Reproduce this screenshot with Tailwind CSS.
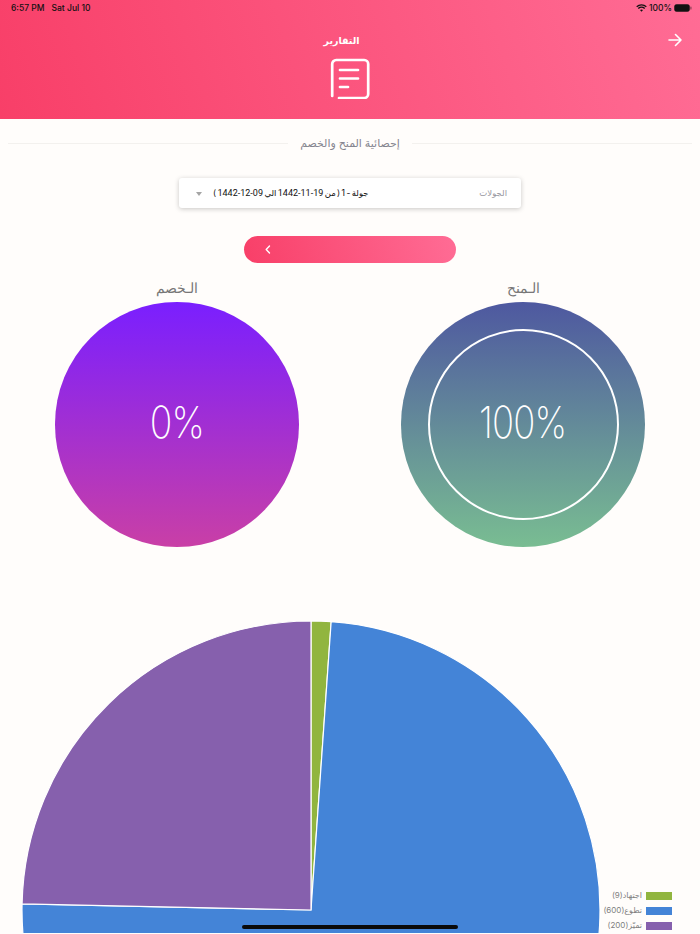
<!DOCTYPE html>
<html lang="ar">
<head>
<meta charset="utf-8">
<script src="https://cdn.jsdelivr.net/npm/@tailwindcss/browser@4"></script>
</head>
<body class="m-0">
<div class="relative w-[700px] h-[934px] overflow-hidden bg-[#fffdfb] font-['Inter','DejaVu_Sans',sans-serif]">
  <header class="h-[119px] bg-[linear-gradient(72deg,#f83f68,#ff6c95)] flex flex-col">
    <div class="h-[16px] flex items-center justify-between pl-[11px] pr-[8px] text-[8.5px] leading-none font-medium text-[#111]">
      <div class="flex gap-[7px]"><span>6:57 PM</span><span>Sat Jul 10</span></div>
      <div class="flex items-center gap-[2px]">
        <svg width="11" height="8" viewBox="0 0 11 8" fill="none" stroke="#111" stroke-width="1.3"><path d="M.7 2.8a7 7 0 0 1 9.6 0M2.3 4.5a4.6 4.6 0 0 1 6.4 0"/><path d="M4 6.1a2.2 2.2 0 0 1 3 0L5.500 7.700z" fill="#111" stroke="none"/></svg>
        <span>100%</span>
        <svg width="18" height="8" viewBox="0 0 18 8"><rect x=".5" y=".5" width="15" height="7" rx="2" fill="#111" stroke="#111" stroke-opacity=".5"/><rect x="16.300" y="2.500" width="1.200" height="3" rx=".6" fill="#111" opacity=".5"/></svg>
      </div>
    </div>
    <div class="relative h-[47px] flex justify-center pt-[18px] pr-[17px]">
      <span dir="rtl" class="text-white text-[9.5px] leading-[14px] font-bold">التقارير</span>
      <svg class="absolute right-[18px] top-[17px]" width="14" height="14" viewBox="0 0 14 14" fill="none" stroke="#fff" stroke-width="1.6" stroke-linecap="round" stroke-linejoin="round"><path d="M1 7h12M7.500 1.500 13 7l-5.500 5.500"/></svg>
    </div>
    <div class="flex justify-center -mt-[5px]">
      <svg width="40" height="41" viewBox="0 0 40 41" fill="none" stroke="#fff" stroke-width="2.700" stroke-linecap="round"><path d="M2.200 38V6a4 4 0 0 1 4-4h28a4 4 0 0 1 4 4v30a4 4 0 0 1-4 4H9"/><path d="M10 12h18M10 20.500h18M10 29h8"/></svg>
    </div>
  </header>

  <div class="h-[1px]"></div>
  <div class="flex items-center mt-[15px] h-[16px] px-[8px] gap-[12px]">
    <div class="flex-1 h-px bg-[#f3f1ee]"></div>
    <span dir="rtl" class="text-[11px] leading-none font-medium text-[#85858f] mt-[1px]">إحصائية المنح والخصم</span>
    <div class="flex-1 h-px bg-[#f3f1ee]"></div>
  </div>

  <div class="mt-[27px] mx-auto w-[342px] h-[30px] bg-white rounded-[3px] shadow-[0_1px_5px_rgba(0,0,0,0.22)] flex items-center justify-between pl-[17px] pr-[14px]">
    <div class="flex items-center gap-[11px]">
      <span class="w-0 h-0 border-x-[3.5px] border-x-transparent border-t-[4px] border-t-[#a5a5a5] mt-[1px]"></span>
      <span dir="rtl" class="text-[8.5px] leading-none text-[#111] [word-spacing:-1px]">جولة - 1 ( من <span class="font-['Roboto'] text-[9px] tracking-[-0.9px]">19-11-1442</span> الي <span class="font-['Roboto'] text-[9px] tracking-[-0.9px]">09-12-1442</span> )</span>
    </div>
    <span dir="rtl" class="text-[8.5px] leading-none text-[#96969e]">الجولات</span>
  </div>

  <div class="mt-[28px] mx-auto w-[212px] h-[27px] rounded-full bg-[linear-gradient(72deg,#f83f68,#ff6c95)] flex items-center pl-[21px]">
    <svg width="6" height="9" viewBox="0 0 6 9" fill="none" stroke="#fff" stroke-width="1.400" stroke-linecap="round" stroke-linejoin="round"><path d="M4.500 1 1.200 4.500 4.500 8"/></svg>
  </div>

  <div class="mt-[16px] grid grid-cols-[354px_338px]">
    <div class="flex flex-col items-center">
      <span dir="rtl" class="text-[14px] leading-[18px] text-[#777] font-light">الـخصم</span>
      <div class="mt-[5px] w-[244px] h-[245px] rounded-full bg-[linear-gradient(180deg,#7a1fff,#c93fa6)] flex items-center justify-center text-white text-[44px] font-extralight tracking-[-1px] pb-[6px]"><span class="block scale-x-[0.85]">0%</span></div>
    </div>
    <div class="flex flex-col items-center">
      <span dir="rtl" class="text-[14px] leading-[18px] text-[#777] font-light">الـمنح</span>
      <div class="mt-[5px] w-[244px] h-[245px] rounded-full bg-[linear-gradient(180deg,#4e58a0,#79bd92)] flex items-center justify-center">
        <div class="w-[191px] h-[191px] rounded-full border-2 border-white flex items-center justify-center text-white text-[44px] font-extralight tracking-[-1px] pb-[6px]"><span class="block scale-x-[0.83]">100%</span></div>
      </div>
    </div>
  </div>

  <svg class="block mt-[52px]" width="700" height="334" viewBox="0 600 700 334">
    <path d="M311 911V622A289 289 0 0 1 331.160 622.700Z" fill="#91b53f" stroke="#fff" stroke-width="1.200"/>
    <path d="M311 911 331.160 622.700A289 289 0 1 1 22.060 904.950Z" fill="#4484d7" stroke="#fff" stroke-width="1.200"/>
    <path d="M311 911 22.060 904.950A289 289 0 0 1 311 622Z" fill="#8660ad" stroke="#fff" stroke-width="1.200"/>
  </svg>

  <div class="absolute right-[28px] top-[891px] flex flex-col gap-[6px] text-[8px] leading-[9px] text-[#808080]">
    <div class="flex items-center justify-end gap-[4px]"><span dir="rtl">اجتهاد(9)</span><span class="w-[26px] h-[8px] bg-[#91b53f]"></span></div>
    <div class="flex items-center justify-end gap-[4px]"><span dir="rtl">تطوع(600)</span><span class="w-[26px] h-[8px] bg-[#4484d7]"></span></div>
    <div class="flex items-center justify-end gap-[4px]"><span dir="rtl">تميّز(200)</span><span class="w-[26px] h-[8px] bg-[#8660ad]"></span></div>
  </div>

  <div class="absolute left-[242px] top-[925px] w-[216px] h-[4px] rounded-full bg-[#0a0a0a]"></div>
</div>
</body>
</html>
